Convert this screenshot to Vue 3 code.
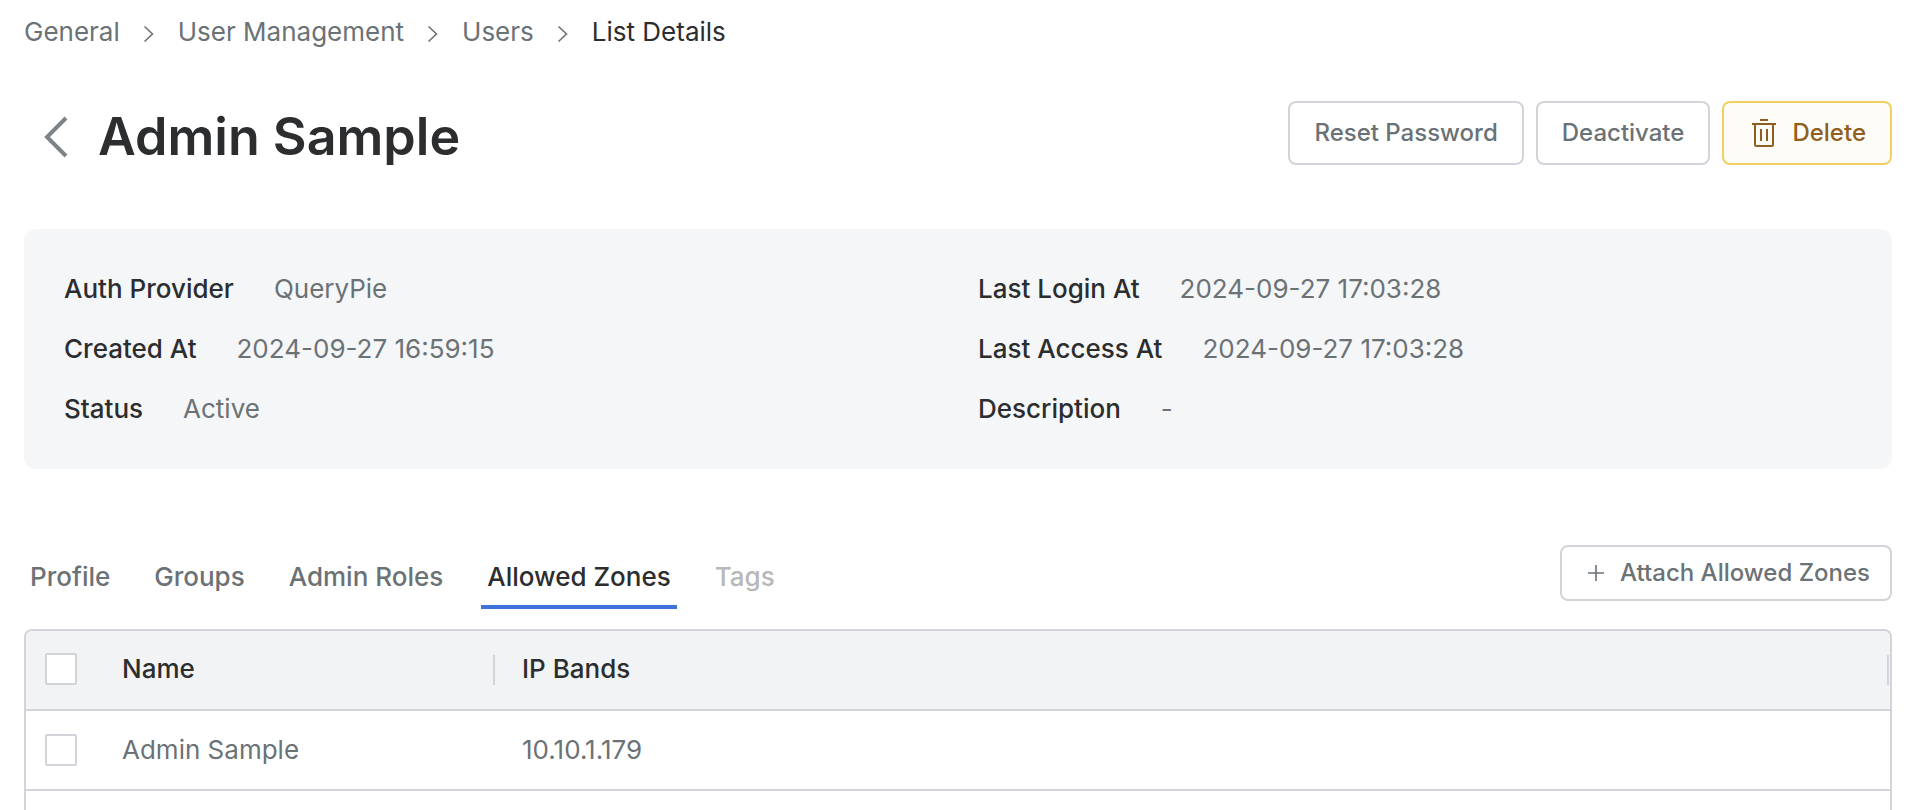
<script setup>
import { ref } from 'vue'

const crumbs = ['General', 'User Management', 'Users']
const details = [
  { label: 'Auth Provider', value: 'QueryPie' },
  { label: 'Last Login At', value: '2024-09-27 17:03:28' },
  { label: 'Created At', value: '2024-09-27 16:59:15' },
  { label: 'Last Access At', value: '2024-09-27 17:03:28' },
  { label: 'Status', value: 'Active' },
  { label: 'Description', value: '-' }
]
const tabs = [
  { name: 'Profile' },
  { name: 'Groups' },
  { name: 'Admin Roles' },
  { name: 'Allowed Zones' },
  { name: 'Tags', disabled: true }
]
const activeTab = ref('Allowed Zones')
const zones = ref([{ name: 'Admin Sample', ip: '10.10.1.179', checked: false }])
const allChecked = ref(false)
const toggleAll = () => zones.value.forEach((z) => { z.checked = allChecked.value })
</script>

<template>
  <div class="page">
    <nav class="crumbs" aria-label="Breadcrumb">
      <template v-for="c in crumbs" :key="c">
        <a href="#">{{ c }}</a>
        <svg class="sep" width="12" height="18" viewBox="0 0 12 18" aria-hidden="true">
          <path d="M1.500 1.500 9.500 9 1.500 16.500" />
        </svg>
      </template>
      <span class="current" aria-current="page">List Details</span>
    </nav>

    <header class="head">
      <button class="back" type="button" aria-label="Back">
        <svg width="24" height="42" viewBox="0 0 24 42" aria-hidden="true">
          <path d="M22 2 3 21 22 40" />
        </svg>
      </button>
      <h1>Admin Sample</h1>
      <div class="actions">
        <button class="btn" type="button">Reset Password</button>
        <button class="btn" type="button">Deactivate</button>
        <button class="btn danger" type="button">
          <svg class="trash" width="24" height="28" viewBox="0 0 24 28" aria-hidden="true">
            <path d="M8 1H16M0 5H24M3 5V25.5Q3 27 4.500 27H19.500Q21 27 21 25.500V5M9 10V22M15 10V22" />
          </svg>
          Delete
        </button>
      </div>
    </header>

    <dl class="info">
      <div v-for="d in details" :key="d.label" class="pair">
        <dt>{{ d.label }}</dt>
        <dd>{{ d.value }}</dd>
      </div>
    </dl>

    <div class="bar">
      <div class="tabs" role="tablist">
        <button
          v-for="t in tabs"
          :key="t.name"
          type="button"
          role="tab"
          class="tab"
          :class="{ active: t.name === activeTab }"
          :aria-selected="t.name === activeTab"
          :disabled="t.disabled"
          @click="activeTab = t.name"
        >{{ t.name }}</button>
      </div>
      <button class="btn attach" type="button">
        <svg class="plus" width="16" height="16" viewBox="0 0 16 16" aria-hidden="true">
          <path d="M8 0V16M0 8H16" />
        </svg>
        Attach Allowed Zones
      </button>
    </div>

    <div class="frame">
      <table>
        <colgroup>
          <col class="c-check" />
          <col class="c-name" />
          <col />
        </colgroup>
        <thead>
          <tr>
            <th class="check"><input v-model="allChecked" type="checkbox" aria-label="Select all zones" @change="toggleAll" /></th>
            <th scope="col"><div class="th">Name</div></th>
            <th scope="col"><div class="th last">IP Bands</div></th>
          </tr>
        </thead>
        <tbody>
          <tr v-for="z in zones" :key="z.name">
            <td class="check"><input v-model="z.checked" type="checkbox" :aria-label="'Select ' + z.name" /></td>
            <td>{{ z.name }}</td>
            <td>{{ z.ip }}</td>
          </tr>
        </tbody>
      </table>
    </div>
  </div>
</template>

<style>
html, body, #app { height: 100%; }
body { margin: 0; background: #fff; overflow: hidden; }
</style>

<style scoped>
.page {
  box-sizing: border-box;
  height: 100%;
  display: flex;
  flex-direction: column;
  padding: 12px 20px 0 24px;
  font-family: Inter, "Liberation Sans", sans-serif;
  font-size: 26px;
  line-height: 40px;
  color: #6b7276;
}
button {
  font: inherit;
  color: inherit;
  background: none;
  border: 0;
  padding: 0;
  cursor: pointer;
}
svg { fill: none; stroke: currentColor; stroke-width: 2; flex: none; display: block; }

.crumbs { display: flex; align-items: center; }
.crumbs a { color: inherit; text-decoration: none; }
.sep { margin: 4px 23px 0; stroke-width: 1.6; }
.current { color: #2b2d2f; }

.head { display: flex; align-items: center; margin-top: 45px; }
.back { margin: 8px 30px 0 20px; color: #7d8488; }
.back svg { stroke-width: 4; }
h1 {
  margin: 8px 0 0;
  font-size: 52px;
  line-height: 64px;
  font-weight: 600;
  color: #2b2d2f;
}
.actions { display: flex; gap: 12px; margin-left: auto; }
.btn {
  box-sizing: border-box;
  display: flex;
  align-items: center;
  height: 64px;
  padding: 0 24px;
  border: 2px solid #d2d4d9;
  border-radius: 8px;
  background: #fff;
  font-size: 24px;
  font-weight: 500;
  white-space: nowrap;
}
.danger { gap: 16px; padding-left: 28px; border-color: #f1d060; background: #fdfcf7; color: #8f5e20; }

.info {
  display: grid;
  grid-template-columns: 1fr 1fr;
  gap: 20px 40px;
  margin: 60px 0 0;
  padding: 40px;
  border-radius: 12px;
  background: #f5f6f8;
}
.pair { display: flex; gap: 40px; }
dt { font-weight: 500; color: #2b2d2f; }
dd { margin: 0; }

.bar { display: flex; align-items: flex-start; justify-content: space-between; margin-top: 76px; }
.tabs { display: flex; gap: 32px; margin-top: 12px; }
.tab { padding: 0 6px 8px; border-bottom: 4px solid transparent; font-weight: 500; }
.tab.active { color: #2b2d2f; border-color: #4072dc; }
.tab:disabled { color: #b6b8ba; cursor: default; }
.attach { height: 56px; padding: 0 20px 0 26px; gap: 16px; }
.plus { stroke-width: 1.6; }

.frame {
  flex: 1;
  margin-top: 20px;
  border: 2px solid #d2d4d9;
  border-bottom: 0;
  border-radius: 8px 8px 0 0;
  overflow: hidden;
}
table { width: 100%; table-layout: fixed; border-collapse: separate; border-spacing: 0; }
.c-check { width: 96px; }
.c-name { width: 400px; }
th, td { height: 78px; padding: 0; border-bottom: 2px solid #d2d4d9; text-align: left; font-weight: 400; }
th { background: #f2f3f5; color: #2b2d2f; font-weight: 500; }
.th { width: 371px; padding-bottom: 2px; line-height: 28px; border-right: 2px solid #d2d4d9; }
.th.last { width: auto; margin-right: 1px; }
.check { padding-left: 19px; }
th.check { height: 76px; padding-bottom: 2px; }
input {
  appearance: none;
  box-sizing: border-box;
  display: block;
  width: 32px;
  height: 32px;
  margin: 0;
  border: 2px solid #d2d4d9;
  border-radius: 2px;
  background: #fff;
}
input:checked { background: #4072dc; border-color: #4072dc; }
</style>
